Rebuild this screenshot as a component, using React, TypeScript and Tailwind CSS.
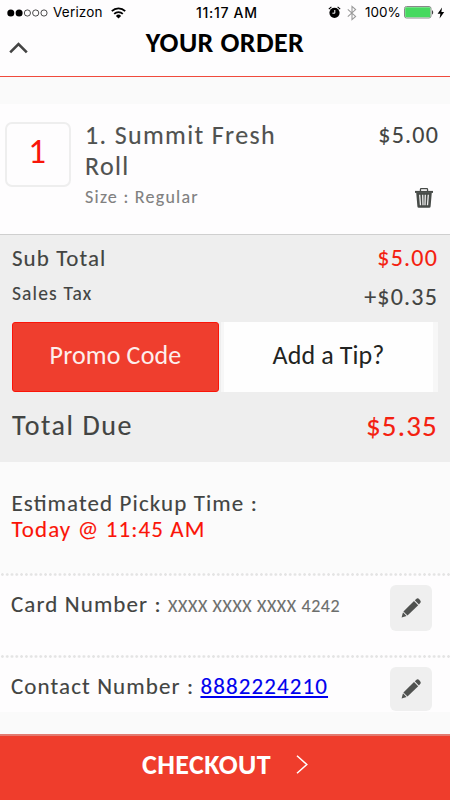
import type { ReactNode } from 'react';

const DOTS = [true, true, false, false, false];

function StatusBar() {
  return (
    <div className="grid h-6 grid-cols-[196px_1fr_122px] items-center pt-px font-['Inter',sans-serif] text-[13.5px] leading-[23px] text-black">
      <div className="flex items-center pl-[7px]">
        <svg width="41" height="8" viewBox="0 0 41 8">
          {DOTS.map((filled, i) => (
            <circle
              key={i}
              cx={3.8 + i * 8.3}
              cy="4"
              r={filled ? 3.5 : 3.1}
              fill={filled ? '#000' : 'none'}
              stroke="#000"
              strokeWidth={filled ? 0 : 0.7}
            />
          ))}
        </svg>
        <span className="ml-[5px] tracking-[0.2px]">Verizon</span>
        <svg className="ml-2" width="15" height="12" viewBox="0 0 15 12" fill="none" stroke="#000">
          <path d="M.8 4.2a9.5 9.5 0 0 1 13.4 0" strokeWidth="1.8" />
          <path d="M3.2 6.8a6.1 6.1 0 0 1 8.6 0" strokeWidth="1.7" />
          <path d="M7.5 11.6 4.9 8.9a3.7 3.7 0 0 1 5.2 0z" fill="#000" stroke="none" />
        </svg>
      </div>
      <span className="text-[14px] font-medium tracking-[0.7px] whitespace-nowrap">11:17 AM</span>
      <div className="flex items-center">
        <svg width="13" height="13" viewBox="0 0 13 13">
          <circle cx="6.5" cy="6.8" r="5.1" />
          <path d="M.8 3.2 3.4.9M12.2 3.2 9.6.9" stroke="#000" strokeWidth="1.1" />
          <path d="M6.8 4v3.2H4.4" fill="none" stroke="#fff" strokeWidth="1" />
        </svg>
        <svg className="ml-1.5" width="10" height="16" viewBox="0 0 10 16" fill="none" stroke="#999" strokeWidth="1.1">
          <path d="M.8 4.4 8.6 11.4 5 14.6V1.4l3.6 3.2L.8 11.6" />
        </svg>
        <span className="ml-2">100%</span>
        <svg className="ml-[3px]" width="31" height="13" viewBox="0 0 31 13">
          <rect x=".5" y=".5" width="26.5" height="11.5" rx="2" fill="#fff" stroke="#888" />
          <rect x="1.2" y="1.2" width="25.1" height="10.1" rx="1" fill="#46d95f" />
          <path d="M28 4.2c1.6.4 1.6 3.8 0 4.2z" fill="#444" />
        </svg>
        <svg className="ml-0.5" width="8" height="12" viewBox="0 0 8 12">
          <path d="M5 .5.6 6.8h2.8L2.6 11.4 7.2 5H4.4z" />
        </svg>
      </div>
    </div>
  );
}

function TrashIcon() {
  return (
    <svg width="18" height="20" viewBox="0 0 18 20" fill="#474b48">
      <path d="M4.8 3.2V1.4Q4.8 0 6.2 0H11.8Q13.2 0 13.2 1.4V3.2H11.9V1.3H6.1V3.2z" />
      <path d="M0 2.9h18v2H0z" />
      <path d="M1.2 4.6h15.6L15.6 18.5q-.1 1.3-1.4 1.3H3.8q-1.3 0-1.4-1.3z" />
      <path
        d="M4.7 6.8l.8 10.4M7.7 6.8l.3 10.4M10.3 6.8l-.3 10.4M13.3 6.8l-.8 10.4"
        stroke="#efefef"
        strokeWidth="1.3"
      />
    </svg>
  );
}

function EditButton() {
  return (
    <button className="mt-[9px] flex w-[42px] items-center justify-center rounded-[6px] bg-[#efefef]">
      <svg width="20" height="20" viewBox="0 0 20 20" fill="#505250">
        <path d="M.6 19.4 2 14.2 5.6 18z" />
        <path d="M2.4 13.4 13 3 17.2 7.2 6.5 17.6z" />
        <path d="M13.8 2.2 15.2 1Q16.7-.3 18.1 1.1L19.1 2.2Q20.4 3.7 19.1 5.1L17.9 6.4z" />
      </svg>
    </button>
  );
}

function DottedRule() {
  return (
    <div className="h-[3px] bg-[radial-gradient(circle_at_center,#e4e4e4_1px,transparent_1.7px)] bg-[length:4.8px_3px] bg-repeat-x" />
  );
}

function DetailRow({ label, className, children }: { label: string; className: string; children: ReactNode }) {
  return (
    <div className={`flex items-start justify-between bg-[#fefdfe] pr-[18px] pl-[11px] ${className}`}>
      <div className="mt-[14px] flex items-baseline leading-7 whitespace-pre">
        <span className="text-[23px] tracking-[1.1px]">{label} </span>
        {children}
      </div>
      <EditButton />
    </div>
  );
}

export default function App() {
  return (
    <div className="flex h-[800px] w-[450px] flex-col overflow-hidden bg-[#fefdfe] font-['Carlito','Calibri','Lato',sans-serif] text-[#424442]">
      <StatusBar />
      <header className="grid h-[53px] shrink-0 grid-cols-[1fr_auto_1fr] items-start border-b border-[#f04a3c] pt-[3px]">
        <svg className="mt-[15px] ml-[9px]" width="19" height="12" viewBox="0 0 19 12" fill="none" stroke="#444" strokeWidth="2.6">
          <path d="M1.2 10.4 9.5 2.1 17.8 10.4" />
        </svg>
        <h1 className="text-[28px] leading-[31px] font-bold tracking-[0.4px] text-black">YOUR ORDER</h1>
      </header>
      <div className="h-[27px] shrink-0 bg-[#fafafa]" />

      <div className="shrink-0 [-webkit-text-stroke:0.12px_currentColor]">
        <section className="flex h-[131px] items-start border-b border-[#cfcfcf] pt-4 pl-[5px]">
          <div className="mt-[2px] flex h-[65px] w-[66px] items-center justify-center rounded-[7px] border-2 border-[#eee] pr-0.5 pb-[6px] text-[35px] leading-none text-[#f8160a] [-webkit-text-stroke:0]">
            1
          </div>
          <div className="ml-[14px] w-[220px]">
            <div className="text-[26px] leading-[31px] tracking-[1.35px] text-[#505250]">
              1. Summit Fresh
              <br />
              Roll
            </div>
            <div className="mt-1 text-[18px] leading-[22px] tracking-[1.25px] text-[#808080]">Size : Regular</div>
          </div>
          <div className="flex flex-1 flex-col items-end pr-[10px]">
            <span className="mr-px text-2xl leading-[30px] tracking-[1.2px]">$5.00</span>
            <button className="mt-[38px] mr-[7px]">
              <TrashIcon />
            </button>
          </div>
        </section>

        <section className="h-[227px] bg-[#eee] px-3 pt-[9px]">
          <div className="flex h-[35px] justify-between leading-7">
            <span className="text-[23px] tracking-[1.05px]">Sub Total</span>
            <span className="text-2xl leading-7 tracking-[1.2px] text-[#f4200f]">$5.00</span>
          </div>
          <div className="flex h-[43px] justify-between leading-7">
            <span className="text-[19.5px] tracking-[1.15px]">Sales Tax</span>
            <span className="mt-1 text-2xl leading-7 tracking-[1.2px]">+$0.35</span>
          </div>
          <div className="flex h-[70px] text-[26px] [-webkit-text-stroke:0]">
            <button className="w-[207px] rounded-[3px] border border-[#fb1408] bg-[#ef3e2e] pb-1 tracking-[0.15px] text-[#fdeeec]">
              Promo Code
            </button>
            <button className="ml-[2px] flex-1 border-r-[5px] border-l-[3px] border-[#f7f7f7] bg-[#fefefe] pb-1 tracking-[0.1px] text-[#222422]">
              Add a Tip?
            </button>
          </div>
          <div className="mt-[17px] flex justify-between leading-[34px]">
            <span className="text-[28px] tracking-[1.55px]">Total Due</span>
            <span className="text-[29px] tracking-[1.2px] text-[#f4200f]">$5.35</span>
          </div>
        </section>

        <section className="h-[111px] bg-[#fbfbfb] px-[11.5px] pt-7 text-[23px] leading-[26px]">
          <div className="tracking-[1.1px] [font-feature-settings:'liga'_1]">Estimated Pickup Time :</div>
          <div className="tracking-[1.1px] text-[#fa1408]">Today @ 11:45 AM</div>
        </section>

        <DottedRule />
        <DetailRow label="Card Number :" className="h-[79px] [&_button]:h-[46px]">
          <span className="text-[18px] tracking-[0.6px] text-[#6c6e6c]">XXXX XXXX XXXX 4242</span>
        </DetailRow>
        <DottedRule />
        <DetailRow label="Contact Number :" className="h-[54px] [&_button]:h-[44px]">
          <a href="tel:8882224210" className="text-[23px] tracking-[1.1px] text-[#0000ee] underline">
            8882224210
          </a>
        </DetailRow>
      </div>

      <div className="flex-1 bg-[#fafafa]" />
      <button className="flex h-[66px] shrink-0 items-center justify-center border-t-2 border-[#e27a70] bg-[#ef3d2c] pb-[7px] text-white">
        <span className="text-[28px] leading-[34px] font-bold tracking-[0.4px]">CHECKOUT</span>
        <svg className="ml-[25px]" width="12" height="19" viewBox="0 0 12 19" fill="none" stroke="#fff" strokeWidth="1.5">
          <path d="M1 .8 10.8 9.5 1 18.2" />
        </svg>
      </button>
    </div>
  );
}
